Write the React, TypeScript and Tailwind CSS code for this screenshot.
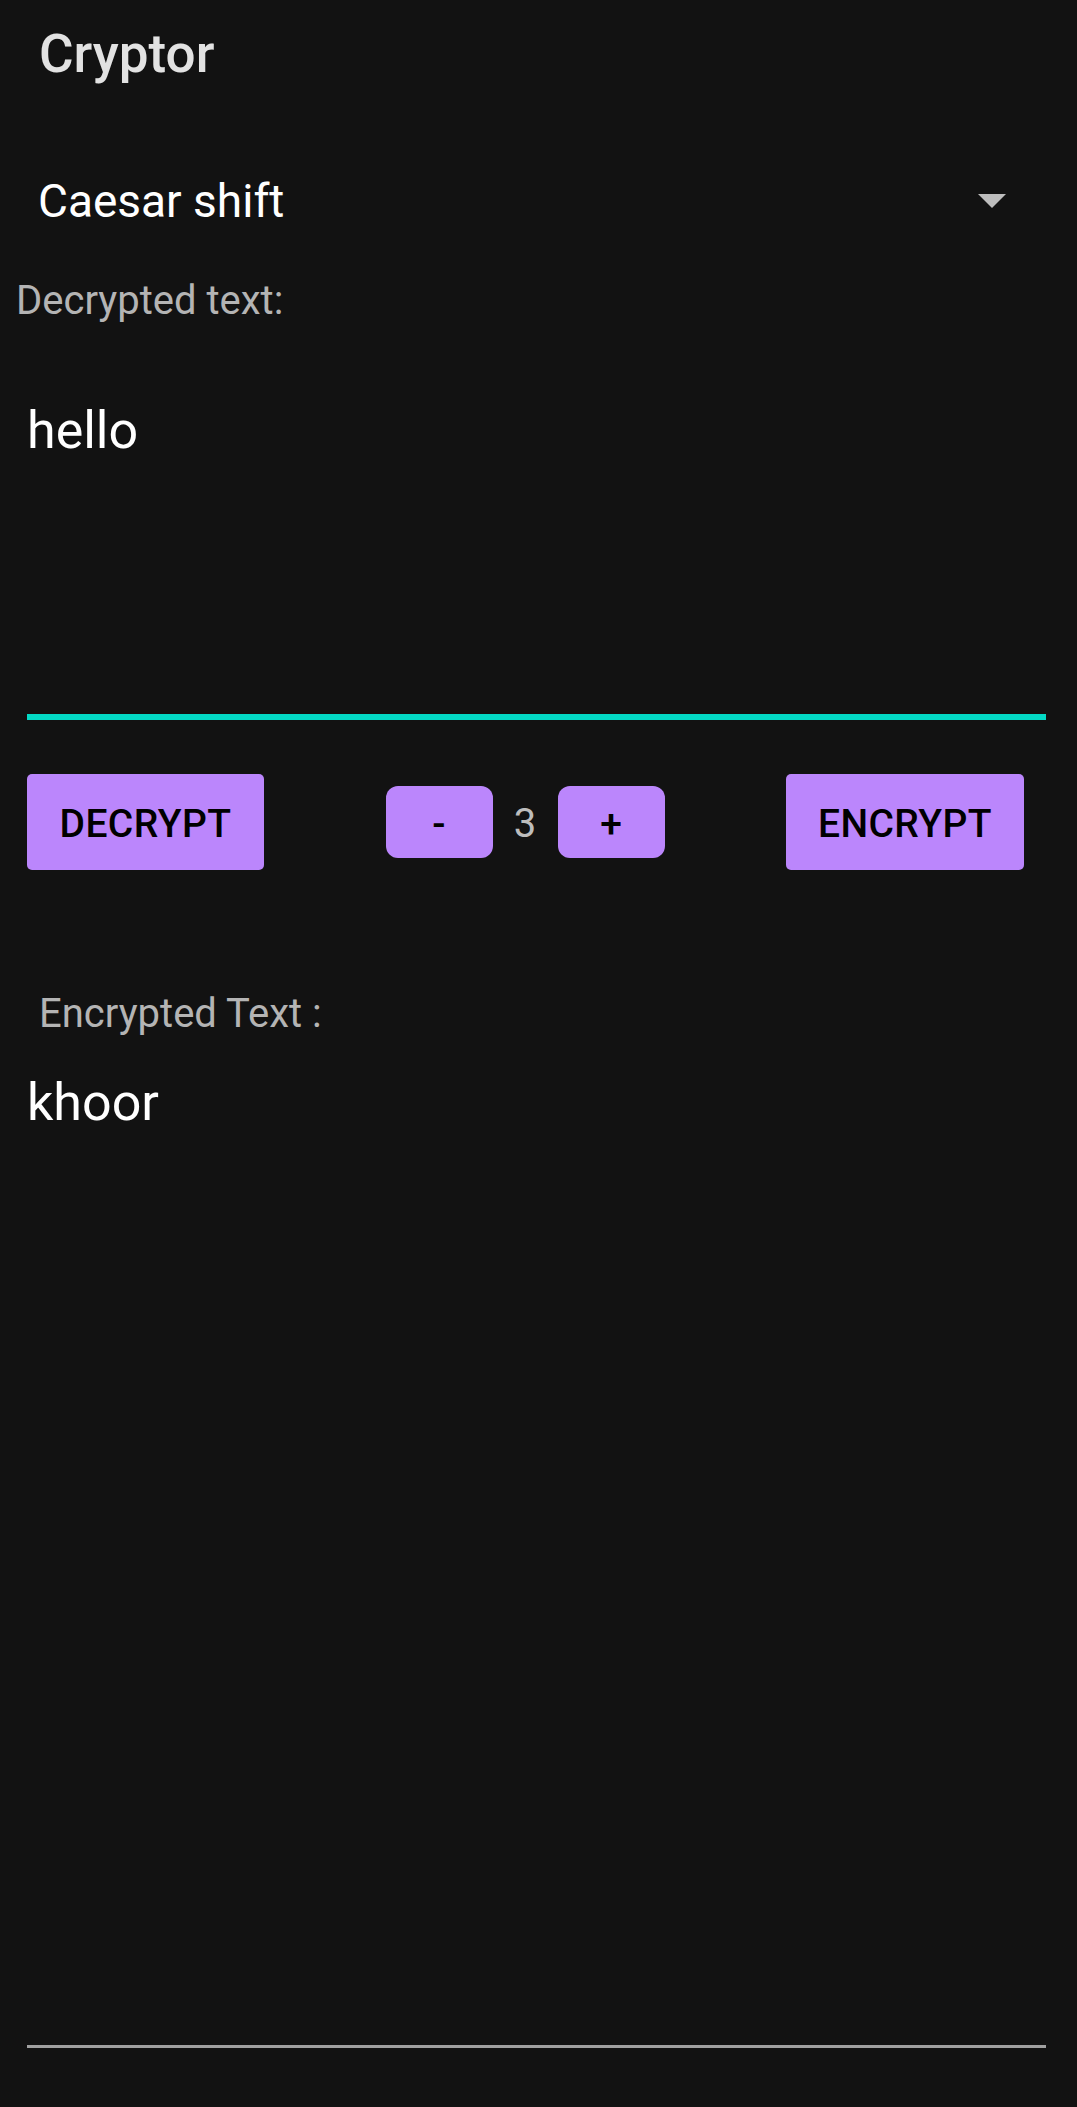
import React from "react";

const font = { fontFamily: "Roboto, 'Noto Sans', sans-serif" };

const App = () => {
  return (
    <div className="bg-[#121212] min-h-[2107px] w-full flex flex-col" style={font}>
      {/* Toolbar title */}
      <div className="mt-[28px] pl-[39px] h-[53px] leading-[53px] text-[53px] font-medium text-[#e2e2e2]">
        Cryptor
      </div>

      {/* Cipher spinner */}
      <div className="mt-[98px] h-[45px] pl-[38px] pr-[71px] flex items-center justify-between">
        <span className="text-[46px] leading-[45px] text-white">Caesar shift</span>
        <svg width="28" height="14" viewBox="0 0 28 14" className="mt-[-2px]">
          <polygon points="0,0 28,0 14,14" fill="#bdbdbd" />
        </svg>
      </div>

      <div className="mt-[57px] pl-[16px] h-[40px] leading-[40px] text-[40px] text-[#b4b4b4]">
        Decrypted text:
      </div>

      {/* Input field */}
      <div className="ml-[27px] mr-[31px] mt-[84px] flex flex-col">
        <div className="h-[52px] leading-[52px] text-[52px] text-white">hello</div>
        <div className="mt-[257px] h-[6px] bg-[#03dac5]" />
      </div>

      {/* Actions */}
      <div className="mt-[54px] h-[96px] pl-[27px] pr-[53px] flex items-center justify-between">
        <button className="w-[237px] h-[96px] pt-[4px] rounded-[5px] bg-[#bb86fc] text-black text-[39px] font-medium tracking-[0.01em]">
          DECRYPT
        </button>
        <div className="flex items-center">
          <button className="w-[107px] h-[72px] pt-[4px] rounded-[12px] bg-[#bb86fc] text-black text-[39px] font-medium">
            -
          </button>
          <span className="w-[65px] pt-[4px] text-center text-[40px] leading-[40px] text-[#bdbdbd]">3</span>
          <button className="w-[107px] h-[72px] pt-[4px] rounded-[12px] bg-[#bb86fc] text-black text-[39px] font-medium">
            +
          </button>
        </div>
        <button className="w-[238px] h-[96px] pt-[4px] rounded-[5px] bg-[#bb86fc] text-black text-[39px] font-medium tracking-[0.01em]">
          ENCRYPT
        </button>
      </div>

      <div className="mt-[124px] pl-[39px] h-[40px] leading-[40px] text-[40px] text-[#b4b4b4]">
        Encrypted Text :
      </div>

      {/* Output field */}
      <div className="ml-[27px] mr-[31px] mt-[43px] flex flex-col">
        <div className="h-[52px] leading-[52px] text-[52px] text-white">khoor</div>
        <div className="mt-[916px] h-[3px] bg-[#a0a0a0]" />
      </div>
    </div>
  );
};

export default App;
